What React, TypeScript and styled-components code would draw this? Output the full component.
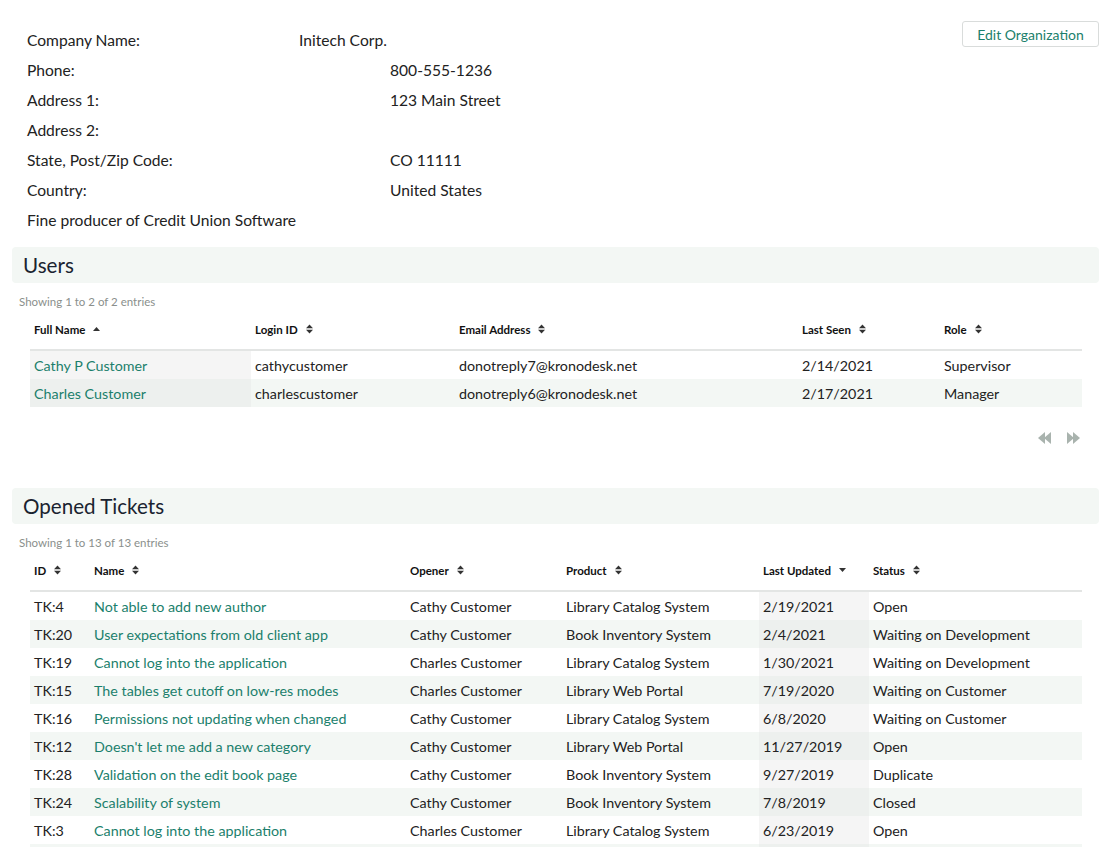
import React from "react";
import styled, { createGlobalStyle } from "styled-components";

const GlobalStyle = createGlobalStyle`
  html, body { margin: 0; padding: 0; background: #fff; }
  body { font-family: Lato, "Open Sans", "Liberation Sans", sans-serif; color: #222; }
`;

const Page = styled.div`
  padding: 21px 11px 0 12px;
`;

const Top = styled.div`
  display: flex;
  justify-content: space-between;
  align-items: flex-start;
`;

const InfoList = styled.div`
  margin-top: 4px;
  padding-left: 15px;
  display: flex;
  flex-direction: column;
`;

const InfoRow = styled.div`
  display: grid;
  grid-template-columns: 272px 91px 1fr;
  height: 30px;
  align-items: center;
  font-size: 15.6px;
  color: #222;
`;

const InfoLabel = styled.div``;

const InfoValue = styled.div<{ $early?: boolean }>`
  grid-column: ${(p) => (p.$early ? "2 / 4" : "3 / 4")};
`;

const InfoNote = styled.div`
  grid-column: 1 / 4;
`;

const EditButton = styled.button`
  width: 137px;
  height: 26px;
  border: 1px solid #d9dcdb;
  border-radius: 3px;
  background: #fff;
  color: #1b7f6c;
  font-family: Lato, "Open Sans", sans-serif;
  font-size: 14px;
  padding: 0;
  cursor: pointer;
`;

const Section = styled.section<{ $top: number }>`
  margin-top: ${(p) => p.$top}px;
`;

const Band = styled.div`
  height: 36px;
  background: #f3f7f4;
  border-radius: 4px;
  display: flex;
  align-items: center;
  padding-left: 11px;
`;

const BandTitle = styled.h2`
  margin: 0;
  font-size: 20.6px;
  font-weight: 400;
  color: #1a2330;
`;

const Info = styled.div`
  margin-top: 11px;
  padding-left: 7px;
  height: 15px;
  line-height: 15px;
  font-size: 11.5px;
  color: #8a8f8c;
`;

const TableWrap = styled.div`
  margin: 0 17px 0 18px;
`;

const Table = styled.table`
  width: 100%;
  table-layout: fixed;
  border-collapse: collapse;
  font-size: 14.3px;
`;

const Th = styled.th`
  height: 40px;
  padding: 0 4px;
  text-align: left;
  font-size: 11.5px;
  font-weight: 700;
  color: #111;
  border-bottom: 2px solid #e3e5e4;
  white-space: nowrap;
`;

const ThInner = styled.span`
  display: inline-flex;
  align-items: center;
  gap: 8px;
`;

const Tr = styled.tr<{ $striped: boolean }>`
  background: ${(p) => (p.$striped ? "#f3f7f4" : "#fff")};
`;

const Td = styled.td<{ $sorted?: boolean; $striped?: boolean }>`
  height: 28px;
  padding: 0 4px;
  white-space: nowrap;
  overflow: hidden;
  color: #222;
  background: ${(p) =>
    p.$sorted ? (p.$striped ? "#edf0ee" : "#f5f5f5") : "transparent"};
`;

const Link = styled.a`
  color: #1b7f6c;
  text-decoration: none;
`;

const Pager = styled.div`
  display: flex;
  justify-content: flex-end;
  gap: 14px;
  margin: 24px 19px 0 0;
  height: 14px;
  align-items: center;
`;

type SortDir = "both" | "asc" | "desc";

const SortIcon = ({ dir }: { dir: SortDir }) => (
  <svg width="7" height="10" viewBox="0 0 7 10" aria-hidden>
    {dir !== "desc" && (
      <path d={dir === "asc" ? "M3.5 3 L7 7 L0 7Z" : "M3.5 0.5 L7 4.2 L0 4.2Z"} fill="#333" />
    )}
    {dir !== "asc" && (
      <path d={dir === "desc" ? "M0 3 L7 3 L3.5 7Z" : "M0 5.8 L7 5.8 L3.5 9.5Z"} fill="#333" />
    )}
  </svg>
);

const PagerIcon = ({ flip }: { flip?: boolean }) => (
  <svg
    width="14"
    height="14"
    viewBox="0 0 14 14"
    style={flip ? { transform: "scaleX(-1)" } : undefined}
    aria-hidden
  >
    <path d="M0 7 L7 1 L7 13Z" fill="#a9b3ae" />
    <path d="M6 7 L13 1 L13 13Z" fill="#a9b3ae" />
  </svg>
);

type Col = { label: string; width: number; sort: SortDir };

const userCols: Col[] = [
  { label: "Full Name", width: 221, sort: "asc" },
  { label: "Login ID", width: 204, sort: "both" },
  { label: "Email Address", width: 343, sort: "both" },
  { label: "Last Seen", width: 142, sort: "both" },
  { label: "Role", width: 142, sort: "both" },
];

const users = [
  ["Cathy P Customer", "cathycustomer", "donotreply7@kronodesk.net", "2/14/2021", "Supervisor"],
  ["Charles Customer", "charlescustomer", "donotreply6@kronodesk.net", "2/17/2021", "Manager"],
];

const ticketCols: Col[] = [
  { label: "ID", width: 60, sort: "both" },
  { label: "Name", width: 316, sort: "both" },
  { label: "Opener", width: 156, sort: "both" },
  { label: "Product", width: 197, sort: "both" },
  { label: "Last Updated", width: 110, sort: "desc" },
  { label: "Status", width: 213, sort: "both" },
];

const tickets = [
  ["TK:4", "Not able to add new author", "Cathy Customer", "Library Catalog System", "2/19/2021", "Open"],
  ["TK:20", "User expectations from old client app", "Cathy Customer", "Book Inventory System", "2/4/2021", "Waiting on Development"],
  ["TK:19", "Cannot log into the application", "Charles Customer", "Library Catalog System", "1/30/2021", "Waiting on Development"],
  ["TK:15", "The tables get cutoff on low-res modes", "Charles Customer", "Library Web Portal", "7/19/2020", "Waiting on Customer"],
  ["TK:16", "Permissions not updating when changed", "Cathy Customer", "Library Catalog System", "6/8/2020", "Waiting on Customer"],
  ["TK:12", "Doesn't let me add a new category", "Cathy Customer", "Library Web Portal", "11/27/2019", "Open"],
  ["TK:28", "Validation on the edit book page", "Cathy Customer", "Book Inventory System", "9/27/2019", "Duplicate"],
  ["TK:24", "Scalability of system", "Cathy Customer", "Book Inventory System", "7/8/2019", "Closed"],
  ["TK:3", "Cannot log into the application", "Charles Customer", "Library Catalog System", "6/23/2019", "Open"],
  ["TK:8", "Search results not sorted correctly", "Charles Customer", "Library Web Portal", "5/14/2019", "Closed"],
  ["TK:6", "Export to CSV fails", "Cathy Customer", "Book Inventory System", "4/2/2019", "Closed"],
  ["TK:2", "Password reset email not received", "Charles Customer", "Library Web Portal", "3/11/2019", "Closed"],
  ["TK:1", "Login page loads slowly", "Cathy Customer", "Library Catalog System", "2/20/2019", "Closed"],
];

const DataTable = ({
  cols,
  rows,
  sortedIndex,
  linkIndex,
}: {
  cols: Col[];
  rows: string[][];
  sortedIndex: number;
  linkIndex: number;
}) => (
  <TableWrap>
    <Table>
      <colgroup>
        {cols.map((c) => (
          <col key={c.label} style={{ width: c.width }} />
        ))}
      </colgroup>
      <thead>
        <tr>
          {cols.map((c) => (
            <Th key={c.label}>
              <ThInner>
                {c.label}
                <SortIcon dir={c.sort} />
              </ThInner>
            </Th>
          ))}
        </tr>
      </thead>
      <tbody>
        {rows.map((r, i) => {
          const striped = i % 2 === 1;
          return (
            <Tr key={i} $striped={striped}>
              {r.map((cell, j) => (
                <Td key={j} $sorted={j === sortedIndex} $striped={striped}>
                  {j === linkIndex ? <Link href="#">{cell}</Link> : cell}
                </Td>
              ))}
            </Tr>
          );
        })}
      </tbody>
    </Table>
  </TableWrap>
);

export default function App() {
  return (
    <>
      <GlobalStyle />
      <Page>
        <Top>
          <InfoList>
            <InfoRow>
              <InfoLabel>Company Name:</InfoLabel>
              <InfoValue $early>Initech Corp.</InfoValue>
            </InfoRow>
            <InfoRow>
              <InfoLabel>Phone:</InfoLabel>
              <InfoValue>800-555-1236</InfoValue>
            </InfoRow>
            <InfoRow>
              <InfoLabel>Address 1:</InfoLabel>
              <InfoValue>123 Main Street</InfoValue>
            </InfoRow>
            <InfoRow>
              <InfoLabel>Address 2:</InfoLabel>
              <InfoValue></InfoValue>
            </InfoRow>
            <InfoRow>
              <InfoLabel>State, Post/Zip Code:</InfoLabel>
              <InfoValue>CO 11111</InfoValue>
            </InfoRow>
            <InfoRow>
              <InfoLabel>Country:</InfoLabel>
              <InfoValue>United States</InfoValue>
            </InfoRow>
            <InfoRow>
              <InfoNote>Fine producer of Credit Union Software</InfoNote>
            </InfoRow>
          </InfoList>
          <EditButton>Edit Organization</EditButton>
        </Top>

        <Section $top={12}>
          <Band>
            <BandTitle>Users</BandTitle>
          </Band>
          <Info>Showing 1 to 2 of 2 entries</Info>
          <DataTable cols={userCols} rows={users} sortedIndex={0} linkIndex={0} />
          <Pager>
            <PagerIcon />
            <PagerIcon flip />
          </Pager>
        </Section>

        <Section $top={43}>
          <Band>
            <BandTitle>Opened Tickets</BandTitle>
          </Band>
          <Info>Showing 1 to 13 of 13 entries</Info>
          <DataTable cols={ticketCols} rows={tickets} sortedIndex={4} linkIndex={1} />
        </Section>
      </Page>
    </>
  );
}
